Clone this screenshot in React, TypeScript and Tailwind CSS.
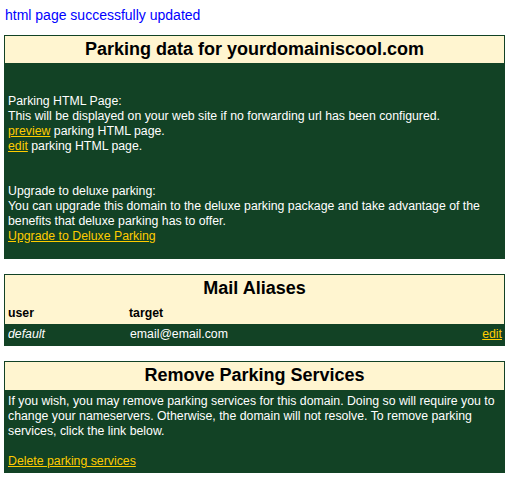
export default function App() {
  const green = 'bg-[#124225]';
  const link = 'text-[#ffcc00] underline';

  return (
    <div className="min-h-[478px] bg-white font-['Liberation_Sans',Arial,sans-serif] text-[12.3px] leading-[15px]">
      <p className="pl-[5px] pt-[7px] text-[14px] leading-[16px] text-[#0000ff]">html page successfully updated</p>

      {/* parking data */}
      <div className="mt-[12px] ml-[4px] w-[501px] border border-[#124225]">
        <h2 className="h-[27px] bg-[#fff5d0] text-center text-[18px] font-bold leading-[27px] text-black">
          Parking data for yourdomainiscool.com
        </h2>
        <div className={`${green} px-[3px] pt-[31px] pb-[14px] text-white`}>
          <p>Parking HTML Page:</p>
          <p>This will be displayed on your web site if no forwarding url has been configured.</p>
          <p>
            <a href="#" className={link}>preview</a> parking HTML page.
          </p>
          <p>
            <a href="#" className={link}>edit</a> parking HTML page.
          </p>
          <div className="h-[30px]" />
          <p>Upgrade to deluxe parking:</p>
          <p>
            You can upgrade this domain to the deluxe parking package and take advantage of the
            <br />
            benefits that deluxe parking has to offer.
          </p>
          <a href="#" className={link}>Upgrade to Deluxe Parking</a>
        </div>
      </div>

      {/* mail aliases */}
      <div className="mt-[15px] ml-[4px] w-[501px] border border-[#124225]">
        <div className="bg-[#fff5d0] pb-[3px] text-black">
          <h2 className="h-[27px] text-center text-[18px] font-bold leading-[27px]">Mail Aliases</h2>
          <div className="grid grid-cols-[121px_1fr] px-[3px] pt-[4px] font-bold">
            <span>user</span>
            <span>target</span>
          </div>
        </div>
        <div className={`${green} grid h-[21px] grid-cols-[122px_1fr_auto] items-center pl-[3px] pr-[2px] text-white`}>
          <span className="italic">default</span>
          <span>email@email.com</span>
          <a href="#" className={link}>edit</a>
        </div>
      </div>

      {/* remove parking */}
      <div className="mt-[15px] ml-[4px] w-[501px] border border-[#124225]">
        <h2 className="h-[28px] bg-[#fff5d0] text-center text-[18px] font-bold leading-[27px] text-black">
          Remove Parking Services
        </h2>
        <div className={`${green} px-[3px] pt-[4px] pb-[3px] text-white`}>
          <p>
            If you wish, you may remove parking services for this domain. Doing so will require you to
            <br />
            change your nameservers. Otherwise, the domain will not resolve. To remove parking
            <br />
            services, click the link below.
          </p>
          <div className="h-[15px]" />
          <a href="#" className={link}>Delete parking services</a>
        </div>
      </div>
    </div>
  );
}
